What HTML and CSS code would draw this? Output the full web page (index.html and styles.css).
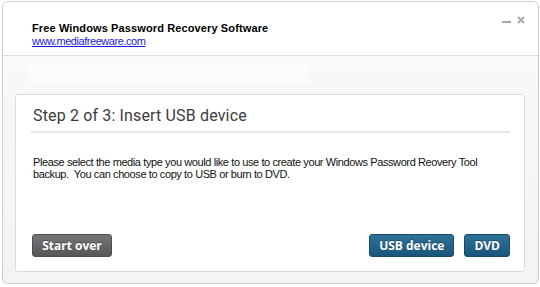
FILE: index.html
```html
<!DOCTYPE html>
<html lang="en">
<head>
  <meta charset="UTF-8" />
  <meta name="viewport" content="width=device-width, initial-scale=1" />
  <title>Free Windows Password Recovery Software</title>
  <link rel="stylesheet" href="styles.css">
</head>
<body>
  <div class="window">
    <header class="header">
      <div class="brand">
        <div class="title">Free Windows Password Recovery Software</div>
        <a class="site" href="#">www.mediafreeware.com</a>
      </div>
      <div class="controls">
        <svg width="9" height="9" viewBox="0 0 9 9"><rect x="0" y="6" width="9" height="2" fill="#a3abab"/></svg>
        <svg width="8" height="8" viewBox="0 0 8 8"><path d="M1 1 L7 7 M7 1 L1 7" stroke="#a3abab" stroke-width="2"/></svg>
      </div>
    </header>

    <div class="content">
      <div class="faint"></div>
      <div class="card">
        <h3>Step 2 of 3: Insert USB device</h3>
        <p>Please select the media type you would like to use to create your Windows Password Reovery Tool backup.&nbsp; You can choose to copy to USB or burn to DVD.</p>
        <div class="actions">
          <button class="btn grey">Start over</button>
          <div class="right">
            <button class="btn blue">USB device</button>
            <button class="btn blue">DVD</button>
          </div>
        </div>
      </div>
    </div>
  </div>
</body>
</html>
```

FILE: styles.css
```css
body {
  margin: 0;
  background: #fff;
  font-family: "Liberation Sans", Arial, sans-serif;
}

.window {
  margin: 1px 0 0 2px;
  width: 535px;
  height: 281px;
  border: 1px solid #cdcdcd;
  border-radius: 6px;
  box-shadow: 0 1px 1px rgba(0, 0, 0, 0.08);
  background: linear-gradient(#fafafa, #f3f3f3);
  display: flex;
  flex-direction: column;
  overflow: hidden;
}

.header {
  height: 53px;
  background: #fff;
  border-bottom: 1px solid #dedede;
  display: flex;
  justify-content: space-between;
  padding: 0 13px 0 29px;
  flex-shrink: 0;
}

.brand {
  padding-top: 20px;
}

.title {
  font-size: 11px;
  font-weight: bold;
  color: #000;
  line-height: 13px;
  letter-spacing: 0.12px;
}

.site {
  display: block;
  font-size: 11px;
  line-height: 13px;
  color: #1d1de0;
  letter-spacing: -0.45px;
}

.controls {
  display: flex;
  gap: 6px;
  padding-top: 14px;
  align-items: flex-start;
}

.controls svg:first-child {
  margin-top: -1px;
}

.content {
  flex: 1;
  display: flex;
  flex-direction: column;
  padding: 0 13px 11px 12px;
}

.faint {
  height: 21px;
  width: 283px;
  margin: 7px 0 10px 12px;
  background: rgba(255, 255, 255, 0.45);
  border-radius: 3px;
}

.card {
  flex: 1;
  background: #fff;
  border: 1px solid #dcdcdc;
  border-radius: 3px;
  display: flex;
  flex-direction: column;
  padding: 12px 14px 14px 15px;
}

.card h3 {
  margin: 0;
  font-family: Roboto, "Liberation Sans", sans-serif;
  font-weight: normal;
  font-size: 16px;
  line-height: 18px;
  color: #3c3c3c;
  letter-spacing: 0.15px;
  padding: 0 0 6px 2px;
  border-bottom: 2px solid #e6e6e6;
}

.card p {
  margin: 23px 0 0 2px;
  font-size: 11px;
  line-height: 12px;
  color: #111;
  letter-spacing: -0.4px;
}

.actions {
  margin-top: auto;
  display: flex;
  justify-content: space-between;
  padding-left: 1px;
}

.right {
  display: flex;
  gap: 10px;
}

.btn {
  height: 23px;
  border-radius: 3px;
  font-family: "Open Sans", sans-serif;
  font-weight: bold;
  font-size: 12px;
  color: #fff;
  padding: 0 9px;
  cursor: pointer;
  text-shadow: 0 -1px 0 rgba(0, 0, 0, 0.3);
}

.grey {
  width: 80px;
  background: linear-gradient(#757575, #575757);
  border: 1px solid #4f4f4f;
}

.blue {
  background: linear-gradient(#2f7299, #19557a);
  border: 1px solid #164b6c;
}
```
